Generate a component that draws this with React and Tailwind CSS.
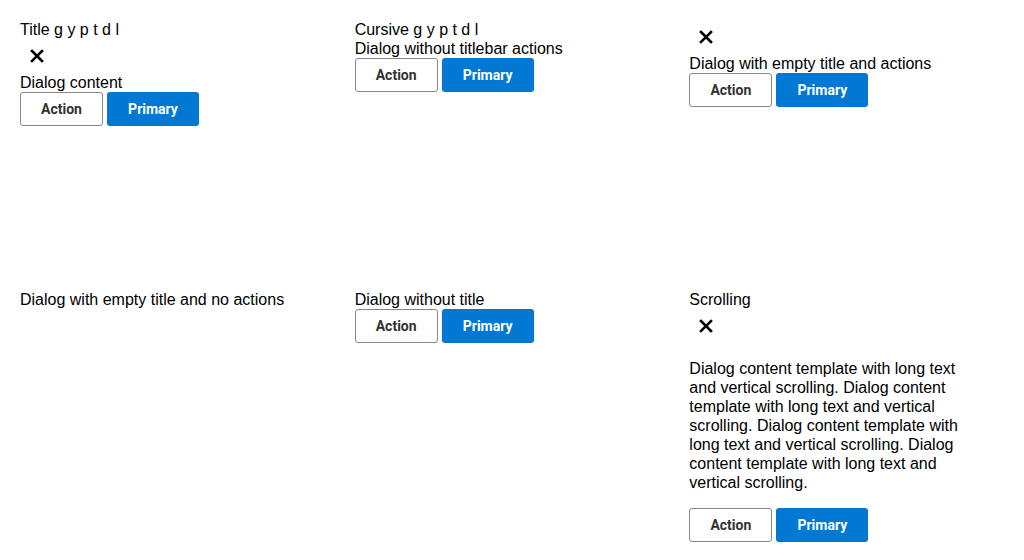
import React from "react";

// Dialog variants gallery — each cell renders one "dialog" layout inline
const longText =
  "Dialog content template with long text and vertical scrolling. Dialog content template with long text and vertical scrolling. Dialog content template with long text and vertical scrolling. Dialog content template with long text and vertical scrolling.";

function CloseButton() {
  return (
    <button className="flex h-[34px] w-[34px] items-center justify-center" aria-label="Close">
      <svg className="h-[14px] w-[14px]" viewBox="0 0 14 14" fill="none" stroke="#000" strokeWidth="2.6" strokeLinecap="square">
        <path d="M2 2l10 10M12 2L2 12" />
      </svg>
    </button>
  );
}

function Actions() {
  return (
    <div className="flex gap-1 font-['Roboto',sans-serif] text-sm font-bold">
      <button className="h-[34px] w-[83px] rounded-[3px] border border-[#8a8886] bg-white text-[#323130]">Action</button>
      <button className="h-[34px] w-[92px] rounded-[3px] bg-[#0078d4] text-white">Primary</button>
    </div>
  );
}

function Dialog({ title, close, children, actions }) {
  return (
    <div className="flex flex-col items-start">
      {title && <div>{title}</div>}
      {close && <CloseButton />}
      {children}
      {actions && <Actions />}
    </div>
  );
}

export default function App() {
  return (
    <div className="grid grid-cols-3 grid-rows-[250px_auto] gap-5 p-5 font-['Liberation_Sans',Arial,sans-serif] text-base leading-[19px] text-black">
      <Dialog title="Title g y p t d l" close actions>
        <div>Dialog content</div>
      </Dialog>
      <Dialog title="Cursive g y p t d l" actions>
        <div>Dialog without titlebar actions</div>
      </Dialog>
      <Dialog close actions>
        <div>Dialog with empty title and actions</div>
      </Dialog>

      <Dialog>
        <div>Dialog with empty title and no actions</div>
      </Dialog>
      <Dialog actions>
        <div>Dialog without title</div>
      </Dialog>
      <Dialog title="Scrolling" close actions>
        <div className="w-[280px] py-4">{longText}</div>
      </Dialog>
    </div>
  );
}
